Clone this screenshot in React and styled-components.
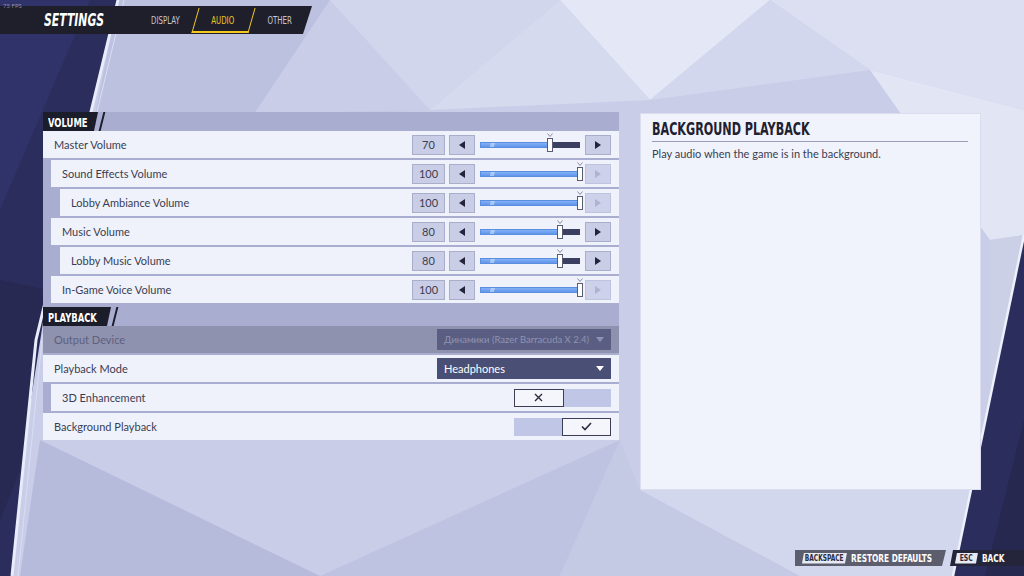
import React from "react";
import styled, { createGlobalStyle, css } from "styled-components";

const COND = `"DejaVu Sans Condensed", "Liberation Sans Narrow", "Roboto Condensed", "DejaVu Sans", sans-serif`;
const BODY = `Lato, "Noto Sans", "Open Sans", "Liberation Sans", sans-serif`;

const GlobalStyle = createGlobalStyle`
  html, body { margin: 0; padding: 0; background: #2b2d5c; }
  body { overflow: hidden; font-family: ${BODY}; }
  * { box-sizing: border-box; }
`;

const Page = styled.div`
  position: relative;
  width: 1024px;
  height: 576px;
  overflow: hidden;
  display: flex;
  flex-direction: column;
`;

const Backdrop = styled.svg`
  position: absolute;
  inset: 0;
  z-index: 0;
`;

const Layer = styled.div`
  position: relative;
  z-index: 1;
  display: flex;
  flex-direction: column;
  height: 100%;
`;

const Fps = styled.div`
  position: absolute;
  left: 3px;
  top: 2px;
  font-family: ${BODY};
  font-size: 6px;
  color: #8a8ea6;
  z-index: 2;
`;

/* condensed display text: the game face is far narrower than any installed font */
const Narrow = styled.span`
  display: inline-block;
  white-space: nowrap;
  transform: scaleX(${(p) => p.$s || 0.78});
  transform-origin: ${(p) => p.$o || "left"} center;
`;

const TopBar = styled.div`
  margin-top: 6px;
  width: 312px;
  height: 28px;
  background: #1e1f2b;
  clip-path: polygon(0 0, 100% 0, calc(100% - 9px) 100%, 0 100%);
  display: flex;
  align-items: center;
`;

const Title = styled.div`
  font-family: ${COND};
  font-style: italic;
  font-weight: 700;
  font-size: 17px;
  color: #ffffff;
  padding-left: 44px;
  width: 137px;
`;

const Tab = styled.div`
  position: relative;
  width: 57px;
  height: 28px;
  display: flex;
  align-items: center;
  justify-content: center;
  font-family: ${COND};
  font-size: 10px;
  color: ${(p) => (p.$active ? "#f3c81f" : "#c5c7d3")};
  ${(p) =>
    p.$active &&
    css`
      &::before {
        content: "";
        position: absolute;
        left: 1px;
        right: -1px;
        top: 2px;
        bottom: 1px;
        border-left: 1px solid #f3c81f;
        border-right: 1px solid #f3c81f;
        border-bottom: 2px solid #f3c81f;
        transform: skewX(-16deg);
      }
    `}
`;

const Main = styled.div`
  margin-top: 78px;
  padding-left: 43px;
  display: flex;
  gap: 21px;
  align-items: flex-start;
`;

const LeftPanel = styled.div`
  width: 576px;
  background: #a9aed1;
  display: flex;
  flex-direction: column;
`;

const Section = styled.div`
  display: flex;
  flex-direction: column;
  gap: 2px;
  & + & {
    margin-top: 4px;
  }
`;

const SectionHead = styled.div`
  height: 19px;
  display: flex;
  align-items: stretch;
  margin-bottom: -2px;
`;

const Tag = styled.div`
  width: ${(p) => p.$w}px;
  background: #1c1d2a;
  color: #ffffff;
  font-family: ${COND};
  font-weight: 700;
  font-size: 13px;
  display: flex;
  align-items: center;
  padding: 1px 0 0 5px;
  overflow: hidden;
  clip-path: polygon(0 0, 100% 0, calc(100% - 4px) 100%, 0 100%);
`;

const Slash = styled.div`
  width: 2px;
  margin-left: 3px;
  background: #1c1d2a;
  transform: skewX(-14deg);
`;

const Row = styled.div`
  height: 27px;
  margin-left: ${(p) => [0, 8, 17][p.$level || 0]}px;
  background: ${(p) => (p.$disabled ? "#8f92af" : "#eff2fb")};
  color: ${(p) => (p.$disabled ? "#5d607e" : "#3a3d52")};
  display: flex;
  align-items: center;
  padding: 0 8px 0 11px;
  font-family: ${BODY};
  font-size: 11px;
  &:first-of-type {
    margin-top: 2px;
  }
`;

const Label = styled.div`
  flex: 1;
`;

const ValueBox = styled.div`
  width: 33px;
  height: 20px;
  background: #c9cee6;
  border: 1px solid #a9aecb;
  display: flex;
  align-items: center;
  justify-content: center;
  color: #3a3d52;
  font-size: 11px;
  margin-right: 4px;
`;

const ArrowBtn = styled.div`
  width: 26px;
  height: 20px;
  background: ${(p) => (p.$disabled ? "#cdd2ea" : "#c9cee6")};
  border: 1px solid ${(p) => (p.$disabled ? "#bfc4de" : "#a9aecb")};
  display: flex;
  align-items: center;
  justify-content: center;
  color: ${(p) => (p.$disabled ? "#aeb3cf" : "#23243a")};
`;

const Track = styled.div`
  position: relative;
  width: 100px;
  height: 6px;
  margin: 0 5px;
  background: #3c4060;
`;

const Fill = styled.div`
  position: absolute;
  left: 0;
  top: 0;
  bottom: 0;
  background: linear-gradient(
      105deg,
      transparent 9px,
      rgba(255, 255, 255, 0.4) 10px,
      rgba(255, 255, 255, 0.4) 13px,
      transparent 14px
    ),
    linear-gradient(#82b2f6, #5f95ea);
  border: 1px solid #5b8de0;
`;

const Handle = styled.div`
  position: absolute;
  top: -4px;
  width: 6px;
  height: 14px;
  margin-left: -3px;
  background: #ffffff;
  border: 1px solid #5a5d72;
`;

const Marker = styled.svg`
  position: absolute;
  top: -6px;
  left: -1px;
`;

const Dropdown = styled.div`
  width: 174px;
  height: 21px;
  background: ${(p) => (p.$disabled ? "#5a5e82" : "#4a4f75")};
  color: ${(p) => (p.$disabled ? "#8f93b3" : "#ffffff")};
  display: flex;
  align-items: center;
  justify-content: space-between;
  padding: 0 7px;
  white-space: nowrap;
  font-size: ${(p) => (p.$disabled ? "9.5px" : "11px")};
`;

const Toggle = styled.div`
  width: 97px;
  height: 18px;
  display: flex;
`;

const Half = styled.div`
  flex: 1;
  display: flex;
  align-items: center;
  justify-content: center;
  background: ${(p) => (p.$on ? "#f4f6fc" : "#c0c6e6")};
  border: ${(p) => (p.$on ? "1px solid #3b3e55" : "none")};
  color: #2a2c40;
`;

const RightPanel = styled.div`
  margin-top: 1px;
  width: 341px;
  height: 377px;
  background: #f0f3fb;
  border: 1px solid #dadded;
  padding: 7px 12px 0 11px;
`;

const InfoTitle = styled.div`
  font-family: ${COND};
  font-weight: 700;
  font-size: 17px;
  line-height: 17px;
  color: #1f2030;
  padding-bottom: 3px;
  border-bottom: 1.5px solid #9a9eb8;
`;

const InfoText = styled.div`
  margin-top: 5px;
  font-family: ${BODY};
  font-size: 11px;
  line-height: 14px;
  color: #3a3d52;
`;

const Footer = styled.div`
  margin-top: auto;
  margin-bottom: 10px;
  display: flex;
  justify-content: flex-end;
  align-items: center;
  gap: 4px;
`;

const Hint = styled.div`
  width: ${(p) => p.$w}px;
  height: 16px;
  display: flex;
  align-items: center;
  gap: 4px;
  background: ${(p) => (p.$dark ? "#24253a" : "#5c5e6e")};
  padding: ${(p) => (p.$dark ? "0 0 0 5px" : "0 0 0 7px")};
  clip-path: ${(p) =>
    p.$dark
      ? "polygon(3px 0, 100% 0, 100% 100%, 0 100%)"
      : "polygon(0 0, 100% 0, calc(100% - 4px) 100%, 0 100%)"};
  font-family: ${COND};
  font-weight: 700;
  font-size: 10px;
  color: #ffffff;
  overflow: hidden;
`;

const Key = styled.span`
  width: ${(p) => p.$w}px;
  flex: none;
  background: #e7e9f3;
  color: #2a2c40;
  height: 11px;
  display: flex;
  align-items: center;
  justify-content: center;
  font-size: 8.5px;
  clip-path: polygon(2px 0, 100% 0, calc(100% - 2px) 100%, 0 100%);
`;

const TriLeft = () => (
  <svg width="6" height="8" viewBox="0 0 6 8">
    <polygon points="6,0 6,8 0,4" fill="currentColor" />
  </svg>
);
const TriRight = () => (
  <svg width="6" height="8" viewBox="0 0 6 8">
    <polygon points="0,0 0,8 6,4" fill="currentColor" />
  </svg>
);
const Caret = () => (
  <svg width="8" height="5" viewBox="0 0 8 5">
    <polygon points="0,0 8,0 4,5" fill="currentColor" />
  </svg>
);

const Slider = ({ value }) => (
  <>
    <ValueBox>{value}</ValueBox>
    <ArrowBtn $disabled={value <= 0}>
      <TriLeft />
    </ArrowBtn>
    <Track>
      <Fill style={{ width: `${value}%` }} />
      <Handle style={{ left: `${value}%` }}>
        <Marker width="6" height="4" viewBox="0 0 6 4">
          <polyline points="0.5,0.5 3,3.5 5.5,0.5" fill="none" stroke="#8a8ea8" strokeWidth="1" />
        </Marker>
      </Handle>
    </Track>
    <ArrowBtn $disabled={value >= 100}>
      <TriRight />
    </ArrowBtn>
  </>
);

const Cross = () => (
  <svg width="9" height="9" viewBox="0 0 9 9">
    <path d="M1 1 L8 8 M8 1 L1 8" stroke="#2a2c40" strokeWidth="1.4" />
  </svg>
);
const Check = () => (
  <svg width="11" height="9" viewBox="0 0 11 9">
    <path d="M1 4.5 L4 7.5 L10 1" fill="none" stroke="#2a2c40" strokeWidth="1.6" />
  </svg>
);

const volumes = [
  { label: "Master Volume", level: 0, value: 70 },
  { label: "Sound Effects Volume", level: 1, value: 100 },
  { label: "Lobby Ambiance Volume", level: 2, value: 100 },
  { label: "Music Volume", level: 1, value: 80 },
  { label: "Lobby Music Volume", level: 2, value: 80 },
  { label: "In-Game Voice Volume", level: 1, value: 100 },
];

const Background = () => (
  <Backdrop width="1024" height="576" viewBox="0 0 1024 576">
    <rect width="1024" height="576" fill="#c9cde8" />
    <polygon points="118,0 330,0 250,120 80,190" fill="#bcc1e0" />
    <polygon points="330,0 560,0 430,110" fill="#d2d6ed" />
    <polygon points="560,0 770,0 650,100" fill="#e4e7f5" />
    <polygon points="430,110 560,0 650,100" fill="#d6daef" />
    <polygon points="770,0 1024,0 1024,110 870,70" fill="#dcdff1" />
    <polygon points="650,100 770,0 870,70" fill="#d3d7ee" />
    <polygon points="870,70 1024,110 1024,235 990,240" fill="#e2e5f4" />
    <polygon points="990,240 1024,235 990,420" fill="#ccd0e6" />
    <polygon points="250,120 430,110 330,112" fill="#c3c8e4" />
    <polygon points="40,440 320,576 20,576" fill="#b6bbdc" />
    <polygon points="320,576 620,440 560,576" fill="#bec3e1" />
    <polygon points="620,440 640,490 800,576 560,576" fill="#c4c9e4" />
    <polygon points="640,490 990,490 953,576 800,576" fill="#d3d7ee" />
    <polygon points="0,0 118,0 36,340 12,576 0,576" fill="#2b2d5c" />
    <polygon points="0,0 90,0 0,210" fill="#30336a" />
    <polygon points="0,280 48,290 20,470 0,520" fill="#272952" />
    <polyline points="118,0 36,340 12,576" fill="none" stroke="#e8ecfb" strokeWidth="3" />
    <polyline points="124,0 42,340 18,576" fill="none" stroke="#d9ddf3" strokeWidth="1" />
    <polygon points="1024,235 1024,576 953,576" fill="#2b2d5c" />
    <polygon points="1024,420 1024,576 985,576" fill="#262850" />
    <polyline points="1024,235 953,576" fill="none" stroke="#eef1fc" strokeWidth="2.5" />
  </Backdrop>
);

export default function App() {
  return (
    <>
      <GlobalStyle />
      <Page>
        <Background />
        <Fps>75 FPS</Fps>
        <Layer>
          <TopBar>
            <Title>
              <Narrow $s={0.71}>SETTINGS</Narrow>
            </Title>
            <Tab>
              <Narrow $s={0.78} $o="center">DISPLAY</Narrow>
            </Tab>
            <Tab $active>
              <Narrow $s={0.78} $o="center">AUDIO</Narrow>
            </Tab>
            <Tab>
              <Narrow $s={0.78} $o="center">OTHER</Narrow>
            </Tab>
          </TopBar>
          <Main>
            <LeftPanel>
              <Section>
                <SectionHead>
                  <Tag $w={55}>
                    <Narrow $s={0.72}>VOLUME</Narrow>
                  </Tag>
                  <Slash />
                </SectionHead>
                {volumes.map((v) => (
                  <Row key={v.label} $level={v.level}>
                    <Label>{v.label}</Label>
                    <Slider value={v.value} />
                  </Row>
                ))}
              </Section>
              <Section>
                <SectionHead>
                  <Tag $w={68}>
                    <Narrow $s={0.72}>PLAYBACK</Narrow>
                  </Tag>
                  <Slash />
                </SectionHead>
                <Row $disabled>
                  <Label>Output Device</Label>
                  <Dropdown $disabled>
                    <span>Динамики (Razer Barracuda X 2.4)</span>
                    <Caret />
                  </Dropdown>
                </Row>
                <Row>
                  <Label>Playback Mode</Label>
                  <Dropdown>
                    <span>Headphones</span>
                    <Caret />
                  </Dropdown>
                </Row>
                <Row $level={1}>
                  <Label>3D Enhancement</Label>
                  <Toggle>
                    <Half $on>
                      <Cross />
                    </Half>
                    <Half />
                  </Toggle>
                </Row>
                <Row>
                  <Label>Background Playback</Label>
                  <Toggle>
                    <Half />
                    <Half $on>
                      <Check />
                    </Half>
                  </Toggle>
                </Row>
              </Section>
            </LeftPanel>
            <RightPanel>
              <InfoTitle>
                <Narrow $s={0.73}>BACKGROUND PLAYBACK</Narrow>
              </InfoTitle>
              <InfoText>Play audio when the game is in the background.</InfoText>
            </RightPanel>
          </Main>
          <Footer>
            <Hint $w={151}>
              <Key $w={45}>
                <Narrow $s={0.77} $o="center">BACKSPACE</Narrow>
              </Key>
              <Narrow $s={0.82}>RESTORE DEFAULTS</Narrow>
            </Hint>
            <Hint $dark $w={74}>
              <Key $w={23}>
                <Narrow $s={0.8} $o="center">ESC</Narrow>
              </Key>
              <Narrow $s={0.82}>BACK</Narrow>
            </Hint>
          </Footer>
        </Layer>
      </Page>
    </>
  );
}
